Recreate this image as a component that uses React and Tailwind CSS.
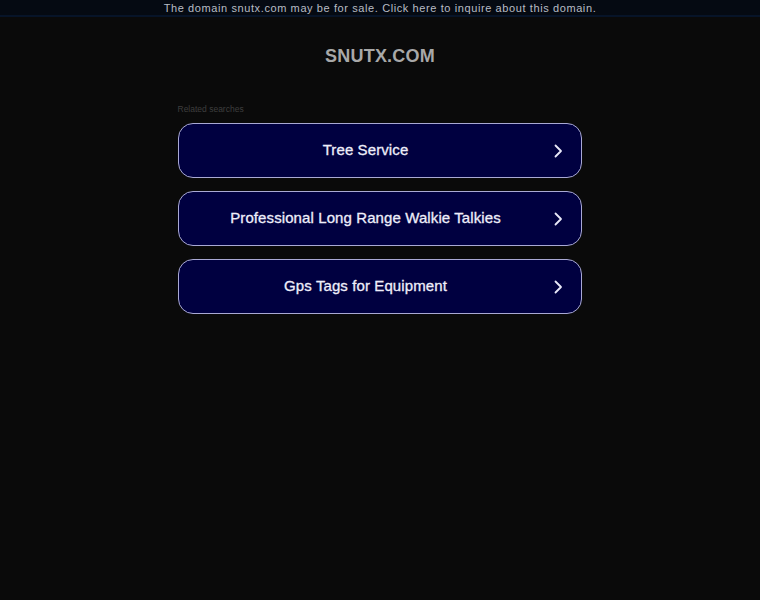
import React from "react";

const searches = [
  "Tree Service",
  "Professional Long Range Walkie Talkies",
  "Gps Tags for Equipment",
];

const Chevron = () => (
  <svg width="10" height="14" viewBox="0 0 10 14" fill="none" className="shrink-0">
    <path d="M2.5 1.5 L8 7 L2.5 12.5" stroke="#e8e8f8" strokeWidth="1.8" strokeLinecap="round" strokeLinejoin="round" />
  </svg>
);

export default function App() {
  return (
    <div
      className="min-h-[600px] w-full bg-[#0a0a0a]"
      style={{ fontFamily: "'Liberation Sans', Arial, sans-serif" }}
    >
      {/* top sale banner */}
      <div className="h-[17px] bg-[#050a12] border-b-[2px] border-[#071428] flex items-start justify-center">
        <a className="mt-[1px] text-[11px] leading-[15px] tracking-[0.6px] text-[#b8bcc4]">
          The domain snutx.com may be for sale. Click here to inquire about this domain.
        </a>
      </div>

      <div className="flex flex-col items-center">
        <h1 className="mt-[28px] text-[18px] leading-[22px] font-bold tracking-[0.2px] text-[#a8a8a8]">
          SNUTX.COM
        </h1>

        <div className="mt-[36px] w-[404px] ml-[-1px]">
          <div className="text-[8.5px] leading-[12px] text-[#3e3e3e]">Related searches</div>
          <div className="mt-[8px] flex flex-col gap-[13px]">
            {searches.map((s) => (
              <div
                key={s}
                className="h-[55px] rounded-[15px] border border-[#a9a9d4] bg-[#000040] flex items-center pl-[20px] pr-[18px]"
              >
                <span className="flex-1 text-center text-[15px] font-medium text-[#eeeefa] tracking-[0.1px] [-webkit-text-stroke:0.3px_#eeeefa]">
                  {s}
                </span>
                <span className="ml-[20px] flex">
                  <Chevron />
                </span>
              </div>
            ))}
          </div>
        </div>
      </div>
    </div>
  );
}
